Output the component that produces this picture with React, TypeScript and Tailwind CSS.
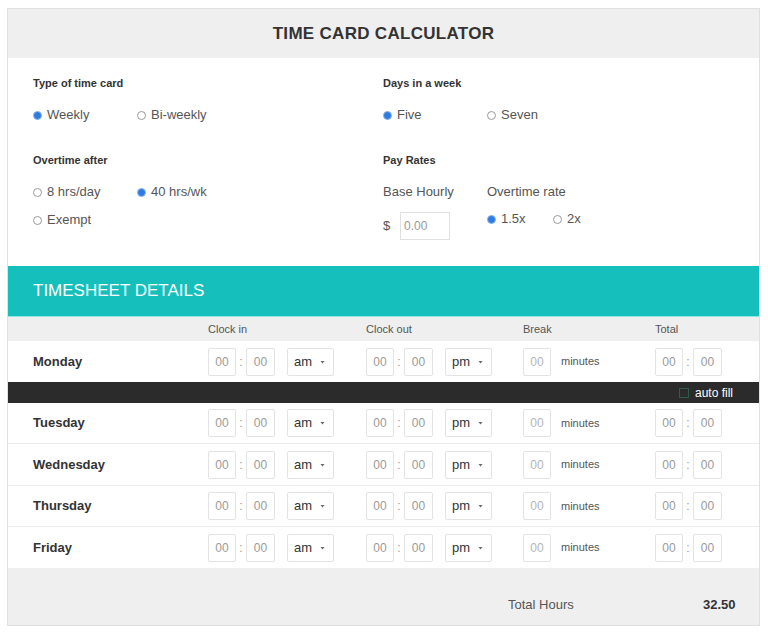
import React from "react";

const font = { fontFamily: '"Liberation Sans", Arial, sans-serif' };

function Radio({ checked, label, className = "" }: { checked?: boolean; label: string; className?: string }) {
  return (
    <div className={`flex items-center gap-[5px] text-[13px] leading-[18px] text-[#555] ${className}`}>
      {checked ? (
        <span className="w-[9px] h-[9px] rounded-full bg-[#2d7be0] border border-[#8db8ee] shrink-0" />
      ) : (
        <span className="w-[9px] h-[9px] rounded-full bg-white border border-[#9a9a9a] shrink-0" />
      )}
      <span>{label}</span>
    </div>
  );
}

function Box({ w = 28, dim = false }: { w?: number; dim?: boolean }) {
  return (
    <div
      className={`h-[28px] ${w === 29 ? "w-[29px]" : "w-[28px]"} border border-[#e3e3e3] rounded-[2px] bg-white flex items-center justify-center text-[12px] ${dim ? "text-[#b5b5b5]" : "text-[#9a9a9a]"}`}
    >
      00
    </div>
  );
}

function Time() {
  return (
    <div className="flex items-center">
      <Box />
      <span className="w-[10px] text-center text-[12px] text-[#999]">:</span>
      <Box w={29} />
    </div>
  );
}

function Select({ v }: { v: string }) {
  return (
    <div className="h-[28px] w-[47px] border border-[#e3e3e3] rounded-[2px] bg-white flex items-center justify-between pl-[6px] pr-[8px] text-[13px] text-[#333]">
      <span>{v}</span>
      <svg width="5" height="4" viewBox="0 0 5 4">
        <path d="M0.5 1 L4.5 1 L2.5 3.5 Z" fill="#666" />
      </svg>
    </div>
  );
}

function DayRow({ day, border = true, h = 41 }: { day: string; border?: boolean; h?: number }) {
  return (
    <div
      className={`flex items-center bg-white ${h === 42 ? "h-[42px]" : "h-[41px]"} ${border ? "border-b border-[#ececec]" : ""}`}
    >
      <div className="w-[200px] pl-[25px] text-[13px] font-bold text-[#333]">{day}</div>
      <div className="w-[158px] flex items-center">
        <Time />
        <div className="ml-[12px]">
          <Select v="am" />
        </div>
      </div>
      <div className="w-[157px] flex items-center">
        <Time />
        <div className="ml-[12px]">
          <Select v="pm" />
        </div>
      </div>
      <div className="w-[132px] flex items-center">
        <Box dim />
        <span className="ml-[10px] text-[11px] text-[#555]">minutes</span>
      </div>
      <div className="flex items-center">
        <Time />
      </div>
    </div>
  );
}

export default function App() {
  return (
    <div className="w-[768px] h-[632px] bg-white pt-[8px] pl-[7px]" style={font}>
      <div className="w-[753px] border border-[#e0e0e0]">
        {/* Header */}
        <div className="h-[49px] bg-[#efefef] flex items-center justify-center text-[17px] font-bold text-[#333] tracking-[0.3px]">
          TIME CARD CALCULATOR
        </div>

        {/* Settings */}
        <div className="h-[208px] bg-white flex pl-[25px]">
          <div className="w-[350px] pt-[17px]">
            <div className="text-[11px] leading-[16px] font-bold text-[#333]">Type of time card</div>
            <div className="flex mt-[15px]">
              <Radio checked label="Weekly" className="w-[104px]" />
              <Radio label="Bi-weekly" />
            </div>
            <div className="text-[11px] leading-[16px] font-bold text-[#333] mt-[28px]">Overtime after</div>
            <div className="flex mt-[15px]">
              <Radio label="8 hrs/day" className="w-[104px]" />
              <Radio checked label="40 hrs/wk" />
            </div>
            <div className="flex mt-[10px]">
              <Radio label="Exempt" />
            </div>
          </div>
          <div className="pt-[17px]">
            <div className="text-[11px] leading-[16px] font-bold text-[#333]">Days in a week</div>
            <div className="flex mt-[15px]">
              <Radio checked label="Five" className="w-[104px]" />
              <Radio label="Seven" />
            </div>
            <div className="text-[11px] leading-[16px] font-bold text-[#333] mt-[28px]">Pay Rates</div>
            <div className="flex mt-[15px]">
              <div className="w-[104px]">
                <div className="text-[13px] leading-[18px] text-[#555]">Base Hourly</div>
                <div className="flex items-center mt-[11px]">
                  <span className="text-[13px] text-[#555] w-[17px]">$</span>
                  <div className="w-[50px] h-[28px] border border-[#e0e0e0] flex items-center pl-[3px] text-[12px] text-[#999]">
                    0.00
                  </div>
                </div>
              </div>
              <div>
                <div className="text-[13px] leading-[18px] text-[#555]">Overtime rate</div>
                <div className="flex mt-[9px]">
                  <Radio checked label="1.5x" className="w-[66px]" />
                  <Radio label="2x" />
                </div>
              </div>
            </div>
          </div>
        </div>

        {/* Teal band */}
        <div className="h-[51px] bg-[#15bfbb] border-b border-[#8fe6e3] flex items-center pl-[25px] text-[17px] text-white">
          TIMESHEET DETAILS
        </div>

        {/* Column header */}
        <div className="h-[24px] bg-[#efefef] flex items-center text-[11px] text-[#555]">
          <div className="w-[200px]" />
          <div className="w-[158px]">Clock in</div>
          <div className="w-[157px]">Clock out</div>
          <div className="w-[132px]">Break</div>
          <div>Total</div>
        </div>

        <DayRow day="Monday" border={false} />

        {/* Dark bar */}
        <div className="h-[21px] bg-[#2b2b2b] flex items-center justify-end pr-[26px]">
          <span className="w-[10px] h-[10px] border border-[#2f5c48] bg-[#2b2b2b] mr-[6px]" />
          <span className="text-[12px] text-white">auto fill</span>
        </div>

        <DayRow day="Tuesday" />
        <DayRow day="Wednesday" h={42} />
        <DayRow day="Thursday" />
        <DayRow day="Friday" border={false} />

        {/* Footer */}
        <div className="h-[57px] bg-[#efefef] flex pt-[28px] pl-[500px] text-[13px] leading-[18px]">
          <div className="w-[195px] text-[#555]">Total Hours</div>
          <div className="font-bold text-[#333]">32.50</div>
        </div>
      </div>
    </div>
  );
}
